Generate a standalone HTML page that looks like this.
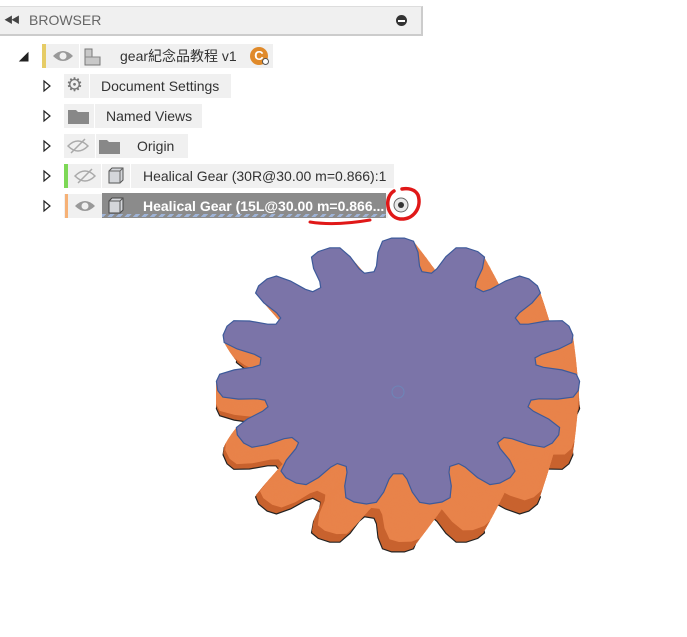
<!DOCTYPE html>
<html><head><meta charset="utf-8"><style>
body{margin:0;width:687px;height:637px;background:#fff;position:relative;overflow:hidden;font-family:"Liberation Sans","Noto Sans CJK SC",sans-serif;font-size:14px;color:#333}
.a{position:absolute}
.box{position:absolute;background:#f0f0f0;height:24px}
.t{position:absolute;line-height:24px;white-space:nowrap}
.sep{position:absolute;width:1px;height:24px;background:#fff}
</style></head><body>
<div class="a" style="left:0;top:6px;width:421px;height:27px;background:#f0f0f0;border-top:1px solid #ddd;border-right:2px solid #ccc;border-bottom:2px solid #ccc"></div>
<div class="t" style="left:4px;top:8px;font-size:9px;color:#444;letter-spacing:-2px">◀◀</div>
<div class="t" style="left:29px;top:8px;color:#666;font-size:14px">BROWSER</div>
<div class="a" style="left:396px;top:15px;width:11px;height:11px;border-radius:50%;background:#333"><div class="a" style="left:2px;top:5px;width:7px;height:1.5px;background:#fff"></div></div>

<svg class="a" style="left:0;top:0" width="60" height="230">
<polygon points="20,61 28,53 28,61" fill="#222" stroke="#222"/>
<g fill="#fff" stroke="#222" stroke-width="1.2">
<polygon points="44,81 50,86 44,91"/><polygon points="44,111 50,116 44,121"/><polygon points="44,141 50,146 44,151"/><polygon points="44,171 50,176 44,181"/><polygon points="44,201 50,206 44,211"/></g></svg>

<div class="box" style="left:42px;top:44px;width:231px"></div>
<div class="a" style="left:42px;top:44px;width:4px;height:24px;background:#e6cc66"></div>
<div class="sep" style="left:79px;top:44px"></div>
<svg class="a" style="left:52px;top:48px" width="22" height="16"><path d="M1,8 Q11,-2 21,8 Q11,18 1,8Z" fill="#999"/><circle cx="11" cy="8" r="3.5" fill="#f0f0f0"/></svg>
<svg class="a" style="left:83px;top:47px" width="20" height="20"><path d="M2,2 h7 v8 h8 v8 h-15z" fill="#c8c8c8" stroke="#777"/><path d="M2,10 h15" stroke="#888"/></svg>
<div class="t" style="left:120px;top:44px">gear紀念品教程 v1</div>
<div class="a" style="left:250px;top:47px;width:18px;height:18px;border-radius:50%;background:#e08a2a;color:#fff;font-weight:bold;font-size:13px;line-height:18px;text-align:center">C</div>
<div class="a" style="left:262px;top:58px;width:5px;height:5px;border-radius:50%;background:#fff;border:1px solid #555"></div>

<div class="box" style="left:64px;top:74px;width:167px"></div>
<div class="sep" style="left:89px;top:74px"></div>
<div class="t" style="left:66px;top:74px;font-size:19px;color:#777">⚙</div>
<div class="t" style="left:101px;top:74px">Document Settings</div>

<div class="box" style="left:64px;top:104px;width:138px"></div>
<div class="sep" style="left:94px;top:104px"></div>
<svg class="a" style="left:68px;top:109px" width="22" height="16"><path d="M0,1 h8 l2,2 h11 v12 h-21z" fill="#888"/></svg>
<div class="t" style="left:106px;top:104px">Named Views</div>

<div class="box" style="left:64px;top:134px;width:124px"></div>
<div class="sep" style="left:95px;top:134px"></div>
<svg class="a" style="left:67px;top:138px" width="22" height="16"><path d="M1,8 Q11,-2 21,8 Q11,18 1,8Z" fill="none" stroke="#aaa" stroke-width="1.5"/><path d="M4,15 L18,1" stroke="#aaa" stroke-width="1.5"/></svg>
<svg class="a" style="left:99px;top:139px" width="22" height="16"><path d="M0,1 h8 l2,2 h11 v12 h-21z" fill="#888"/></svg>
<div class="t" style="left:137px;top:134px">Origin</div>

<div class="box" style="left:64px;top:164px;width:330px"></div>
<div class="a" style="left:64px;top:164px;width:4px;height:24px;background:#7dd856"></div>
<div class="sep" style="left:101px;top:164px"></div><div class="sep" style="left:130px;top:164px"></div>
<svg class="a" style="left:74px;top:168px" width="22" height="16"><path d="M1,8 Q11,-2 21,8 Q11,18 1,8Z" fill="none" stroke="#aaa" stroke-width="1.5"/><path d="M4,15 L18,1" stroke="#aaa" stroke-width="1.5"/></svg>
<svg class="a" style="left:106px;top:166px" width="20" height="20"><path d="M3,5 l3,-3 h11 v12 l-3,3 h-11z" fill="#d4d6da" stroke="#555"/><path d="M3,5 h11 v12 M14,5 l3,-3" fill="none" stroke="#666"/></svg>
<div class="t" style="left:143px;top:164px">Healical Gear (30R@30.00 m=0.866):1</div>

<div class="box" style="left:64px;top:194px;width:324px"></div>
<div class="a" style="left:65px;top:194px;width:3px;height:24px;background:#f6b176"></div>
<div class="a" style="left:102px;top:193px;width:284px;height:25px;background:#8b8b8b"></div>
<div class="a" style="left:102px;top:214px;width:284px;height:3px;background:repeating-linear-gradient(135deg,#9fb4d8 0 3px,#8b8b8b 3px 6px)"></div>
<svg class="a" style="left:74px;top:198px" width="22" height="16"><path d="M1,8 Q11,-2 21,8 Q11,18 1,8Z" fill="#999"/><circle cx="11" cy="8" r="3.5" fill="#f0f0f0"/></svg>
<svg class="a" style="left:106px;top:196px" width="20" height="20"><path d="M3,5 l3,-3 h11 v12 l-3,3 h-11z" fill="#d4d6da" stroke="#444"/><path d="M3,5 h11 v12 M14,5 l3,-3" fill="none" stroke="#555"/></svg>
<div class="t" style="left:143px;top:194px;color:#fff;font-weight:bold">Healical Gear (15L@30.00 m=0.866...</div>
<svg class="a" style="left:380px;top:183px" width="50" height="45"><circle cx="21" cy="22" r="7" fill="#e8e8e8" stroke="#666"/><circle cx="21" cy="22" r="3" fill="#333"/><path d="M14,8 C4,14 6,34 20,36 C34,37 42,24 38,12 C35,6 28,5 22,6" fill="none" stroke="#e01818" stroke-width="3.5" stroke-linecap="round"/></svg>
<svg class="a" style="left:300px;top:212px" width="80" height="16"><path d="M10,10 Q35,14 70,8" fill="none" stroke="#e01818" stroke-width="3" stroke-linecap="round"/></svg>

<svg class="a" style="left:0;top:0" width="687" height="637" id="g"></svg>
<script>
function gp(cx,cy,rx,ry,off){var n=15,s='',d=Math.PI/180;for(var i=0;i<n;i++){var a=(-90+off+i*24)*d;
var P=[[0.76,a-10*d],[0.8,a-8.5*d],[0.9,a-7*d],[0.98,a-5*d],[1,a-2*d],[1,a+2*d],[0.98,a+5*d],[0.9,a+7*d],[0.8,a+8.5*d],[0.76,a+10*d]];
P.forEach(function(p,j){var x=cx+rx*p[0]*Math.cos(p[1]),y=cy+ry*p[0]*Math.sin(p[1]);s+=(i==0&&j==0?'M':'L')+x.toFixed(1)+','+y.toFixed(1);});}
return s+'Z';}
var h='';
h+='<path d="'+gp(398,418,182,134,12)+'" fill="#c8622e" stroke="#222" stroke-width="1.2"/>';
for(var k=44;k>=1;k--){h+='<path d="'+gp(398,372+k,182,134,k*0.27)+'" fill="'+(k>36?'#c8622e':'#e8834a')+'"/>';}
h+='<path d="'+gp(398,372,182,134,0)+'" fill="#7b74a8" stroke="#3d5a9a" stroke-width="1.2"/>';
h+='<circle cx="398" cy="392" r="6" fill="none" stroke="#6d86b8"/>';
document.getElementById('g').innerHTML=h;
</script>
</body></html>
